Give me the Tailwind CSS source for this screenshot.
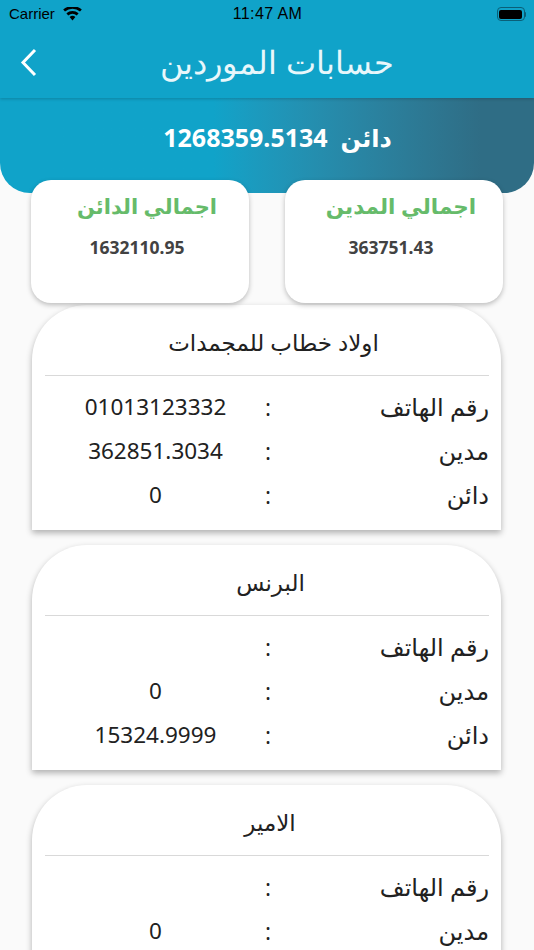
<!DOCTYPE html>
<html lang="ar">
<head>
  <meta charset="UTF-8" />
  <meta name="viewport" content="width=device-width, initial-scale=1.0"/>
  <title>حسابات الموردين</title>
  <script src="https://cdn.jsdelivr.net/npm/@tailwindcss/browser@4"></script>
</head>
<body class="bg-[#fafafa] font-['Open_Sans','DejaVu_Sans',sans-serif] overflow-hidden">
  <div class="w-[534px] h-[950px] overflow-hidden">
    <!-- header -->
    <header class="relative z-10 h-[98px] bg-[#10a3c9] shadow-[0_1px_3px_rgba(0,0,0,0.2)]">
      <div class="h-[28px] flex items-center justify-between pl-[9px] pr-[8px] text-black">
        <div class="flex items-center gap-[8px] w-[150px]">
          <span class="text-[15px] font-['Liberation_Sans',sans-serif]">Carrier</span>
          <svg width="19" height="14" viewBox="0 0 19 14"><path d="M9.5 13.5 6.6 10a4.6 4.6 0 0 1 5.8 0zM5.2 8.4 3.4 6.2a9.6 9.6 0 0 1 12.2 0l-1.8 2.2a6.8 6.8 0 0 0-8.6 0zM2 4.6.2 2.5a14.4 14.4 0 0 1 18.6 0L17 4.6a11.6 11.6 0 0 0-15 0z" fill="#000"/></svg>
        </div>
        <span class="text-[16px] tracking-[0.4px] font-['Liberation_Sans',sans-serif]">11:47 AM</span>
        <div class="w-[150px] flex justify-end">
          <div class="flex items-center">
            <div class="w-[28px] h-[14px] rounded-[4px] border border-[#0a5f78] p-[1.5px]"><div class="w-full h-full rounded-[2px] bg-black"></div></div>
            <div class="w-[1.5px] h-[5px] bg-[#0a5f78] rounded-r-sm"></div>
          </div>
        </div>
      </div>
      <div class="relative h-[70px] flex items-center justify-center pl-[20px]">
        <svg class="absolute left-[20px] top-[20px]" width="17" height="30" viewBox="0 0 17 30"><path d="M15 2 3 14.5 15 27" fill="none" stroke="#fff" stroke-width="3"/></svg>
        <h1 dir="rtl" class="text-[32px] leading-none text-[#e8f7fb] font-light pb-[2px]">حسابات الموردين</h1>
      </div>
    </header>

    <!-- balance banner -->
    <div class="h-[95px] rounded-b-[30px] bg-gradient-to-r from-[#10a3c9] from-40% to-[#2f6d85] to-90% flex justify-center pt-[24px] pl-[21px]">
      <div class="flex items-center gap-[13px] h-[32px] text-white font-bold">
        <span class="text-[25px] font-['Noto_Sans',sans-serif]">1268359.5134</span>
        <span dir="rtl" class="text-[24px]">دائن</span>
      </div>
    </div>

    <!-- totals -->
    <div class="relative -mt-[13px] flex justify-between pl-[31px] pr-[31px]">
      <div class="w-[218px] h-[123px] rounded-[20px] bg-white shadow-[0_2px_5px_rgba(0,0,0,0.25)] flex flex-col items-center pt-[11px]">
        <div dir="rtl" class="text-[21px] leading-[30px] font-bold text-[#66bb6a] translate-x-[7px]">اجمالي الدائن</div>
        <div class="mt-[15px] text-[17.5px] leading-[22px] font-bold text-[#424242] font-['Noto_Sans',sans-serif] -translate-x-[3px]">1632110.95</div>
      </div>
      <div class="w-[218px] h-[123px] rounded-[20px] bg-white shadow-[0_2px_5px_rgba(0,0,0,0.25)] flex flex-col items-center pt-[11px]">
        <div dir="rtl" class="text-[21.5px] leading-[30px] font-bold text-[#66bb6a] translate-x-[7px]">اجمالي المدين</div>
        <div class="mt-[15px] text-[17.5px] leading-[22px] font-bold text-[#424242] font-['Noto_Sans',sans-serif] -translate-x-[3px]">363751.43</div>
      </div>
    </div>

    <!-- suppliers -->
    <div class="mt-[2px] mx-[32px] w-[469px] flex flex-col gap-[15px]">
      <section class="h-[225px] rounded-t-[55px] bg-white shadow-[0_3px_6px_rgba(0,0,0,0.3)] pl-[13px] pr-[12px]">
        <h2 dir="rtl" class="h-[71px] border-b border-[#d9d9d9] flex items-center justify-center pt-[5px] pl-[13px] text-[23px] text-[#212121]">اولاد خطاب للمجمدات</h2>
        <div class="pt-[9px] text-[#212121] text-[24px]">
          <div class="h-[44px] grid grid-cols-[221px_1fr_1fr] items-center"><span class="text-center text-[22.5px] font-['Noto_Sans',sans-serif]">01013123332</span><span class="text-[23px] text-left -ml-[1px]">:</span><span dir="rtl" class="text-right">رقم الهاتف</span></div>
          <div class="h-[44px] grid grid-cols-[221px_1fr_1fr] items-center"><span class="text-center text-[22.5px] font-['Noto_Sans',sans-serif]">362851.3034</span><span class="text-[23px] text-left -ml-[1px]">:</span><span dir="rtl" class="text-right">مدين</span></div>
          <div class="h-[44px] grid grid-cols-[221px_1fr_1fr] items-center"><span class="text-center text-[22.5px] font-['Noto_Sans',sans-serif]">0</span><span class="text-[23px] text-left -ml-[1px]">:</span><span dir="rtl" class="text-right">دائن</span></div>
        </div>
      </section>
      <section class="h-[225px] rounded-t-[55px] bg-white shadow-[0_3px_6px_rgba(0,0,0,0.3)] pl-[13px] pr-[12px]">
        <h2 dir="rtl" class="h-[71px] border-b border-[#d9d9d9] flex items-center justify-center pt-[5px] pl-[7px] text-[23px] text-[#212121]">البرنس</h2>
        <div class="pt-[9px] text-[#212121] text-[24px]">
          <div class="h-[44px] grid grid-cols-[221px_1fr_1fr] items-center"><span></span><span class="text-[23px] text-left -ml-[1px]">:</span><span dir="rtl" class="text-right">رقم الهاتف</span></div>
          <div class="h-[44px] grid grid-cols-[221px_1fr_1fr] items-center"><span class="text-center text-[22.5px] font-['Noto_Sans',sans-serif]">0</span><span class="text-[23px] text-left -ml-[1px]">:</span><span dir="rtl" class="text-right">مدين</span></div>
          <div class="h-[44px] grid grid-cols-[221px_1fr_1fr] items-center"><span class="text-center text-[22.5px] font-['Noto_Sans',sans-serif]">15324.9999</span><span class="text-[23px] text-left -ml-[1px]">:</span><span dir="rtl" class="text-right">دائن</span></div>
        </div>
      </section>
      <section class="h-[225px] rounded-t-[55px] bg-white shadow-[0_3px_6px_rgba(0,0,0,0.3)] pl-[13px] pr-[12px]">
        <h2 dir="rtl" class="h-[71px] border-b border-[#d9d9d9] flex items-center justify-center pt-[5px] pl-[6px] text-[23px] text-[#212121]">الامير</h2>
        <div class="pt-[9px] text-[#212121] text-[24px]">
          <div class="h-[44px] grid grid-cols-[221px_1fr_1fr] items-center"><span></span><span class="text-[23px] text-left -ml-[1px]">:</span><span dir="rtl" class="text-right">رقم الهاتف</span></div>
          <div class="h-[44px] grid grid-cols-[221px_1fr_1fr] items-center"><span class="text-center text-[22.5px] font-['Noto_Sans',sans-serif]">0</span><span class="text-[23px] text-left -ml-[1px]">:</span><span dir="rtl" class="text-right">مدين</span></div>
        </div>
      </section>
    </div>
  </div>
</body>
</html>
